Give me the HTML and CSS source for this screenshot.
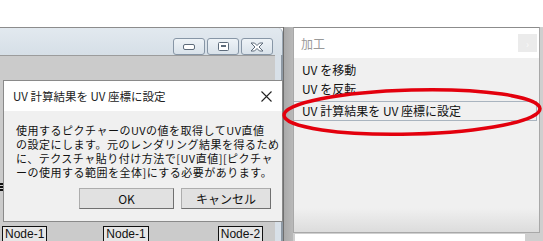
FILE: index.html
```html
<!DOCTYPE html>
<html lang="ja">
<head>
    <meta charset="UTF-8">
    <title>UV 計算結果を UV 座標に設定</title>
    <link rel="stylesheet" href="styles.css">
</head>
<body>
    <div class="screen">
        <div class="top"></div>
        <div class="desk">
            <div class="win">
                <div class="win-title">
                    <div class="caps">
                        <span class="cap">
                            <svg width="12" height="6" viewBox="0 0 12 6"><rect x="0.5" y="0.5" width="11" height="5" rx="1.5" fill="#fff" stroke="#5d6b7a"/></svg>
                        </span>
                        <span class="cap">
                            <svg width="11" height="9" viewBox="0 0 11 9"><rect x="0.5" y="0.5" width="10" height="8" rx="1" fill="#fff" stroke="#5d6b7a"/><rect x="3" y="3" width="5" height="2" fill="#5d6b7a"/></svg>
                        </span>
                        <span class="cap">
                            <svg width="14" height="10" viewBox="0 0 14 10"><path d="M1 1 H4.5 L7 3.5 L9.5 1 H13 L9 5 L13 9 H9.5 L7 6.5 L4.5 9 H1 L5 5 Z" fill="#fff" stroke="#5d6b7a" stroke-linejoin="round"/></svg>
                        </span>
                    </div>
                </div>
                <div class="win-body">
                    <div class="marks"></div>
                    <div class="dialog">
                        <div class="dlg-head">
                            <span>UV 計算結果を UV 座標に設定</span>
                            <svg class="dlg-close" width="11" height="11" viewBox="0 0 11 11"><path d="M0.5 0.5 L10.5 10.5 M10.5 0.5 L0.5 10.5" stroke="#222" stroke-width="1.1"/></svg>
                        </div>
                        <div class="dlg-body">
                            <p class="dlg-text">使用するピクチャーのUVの値を取得してUV直値<br>の設定にします。元のレンダリング結果を得るため<br>に、テクスチャ貼り付け方法で[UV直値][ピクチャ<br>ーの使用する範囲を全体]にする必要があります。</p>
                            <div class="dlg-buttons">
                                <button class="btn btn-ok">OK</button>
                                <button class="btn btn-cancel">キャンセル</button>
                            </div>
                        </div>
                    </div>
                    <div class="nodes">
                        <span class="node">Node-1</span>
                        <span class="node node-mid">Node-1</span>
                        <span class="node node-end">Node-2</span>
                    </div>
                </div>
            </div>
            <div class="gap"></div>
            <div class="side">
                <div class="panel">
                    <div class="panel-head">
                        <span>加工</span>
                        <span class="panel-btn">›</span>
                    </div>
                    <ul class="menu">
                        <li class="item">UV を移動</li>
                        <li class="item">UV を反転</li>
                        <li class="item selected">UV 計算結果を UV 座標に設定</li>
                    </ul>
                </div>
                <div class="under"></div>
            </div>
        </div>
        <!-- red annotation ring drawn over the screenshot -->
        <svg class="ring" width="266" height="56" viewBox="0 0 266 56">
            <ellipse cx="132" cy="28" rx="128" ry="22" fill="none" stroke="#e3000d" stroke-width="3.5" transform="rotate(-1.5 132 28)"/>
        </svg>
    </div>
</body>
</html>
```

FILE: styles.css
```css
* {
    box-sizing: border-box;
    margin: 0;
    padding: 0;
}

body {
    width: 543px;
    height: 241px;
    overflow: hidden;
    background: #fff;
    font-family: "Noto Sans CJK JP", sans-serif;
    font-size: 12px;
    color: #111;
}

.screen {
    position: relative;
    width: 543px;
    height: 241px;
}

.top {
    height: 27px;
}

.desk {
    display: flex;
    height: 214px;
}

/* left application window */
.win {
    width: 283px;
    display: flex;
    flex-direction: column;
    border-top: 1px solid #8c8c8c;
}

.win-title {
    height: 32px;
    background: linear-gradient(#e2e9ef, #d6dfe7);
    border-right: 1px solid #9aa6b2;
    display: flex;
    justify-content: flex-end;
    align-items: flex-start;
    padding: 10px 9px 0 0;
    border-top-right-radius: 5px;
}

.caps {
    display: flex;
    gap: 2px;
}

.cap {
    width: 32px;
    height: 17px;
    border: 1px solid #8796a6;
    border-radius: 3px;
    background: linear-gradient(#eef3f7, #d9e2ea);
    display: flex;
    align-items: center;
    justify-content: center;
}

.win-body {
    flex: 1;
    position: relative;
    display: flex;
    flex-direction: column;
    padding-top: 25px;
    background:
        linear-gradient(#9c9c9c, #9c9c9c) 0 0 / 275px 1px no-repeat,
        linear-gradient(to right, #cbcbcb 0 275px, #d8e0e8 275px 281px, #8e99a4 281px 283px);
}

.marks {
    position: absolute;
    left: 0;
    top: 128px;
    width: 3px;
    height: 8px;
    background: repeating-linear-gradient(#111 0 2px, transparent 2px 3px);
}

.dialog {
    margin-left: 3px;
    width: 280px;
    height: 142px;
    border: 1px solid #8a8a8a;
    background: #f0f0f0;
    display: flex;
    flex-direction: column;
}

.dlg-head {
    height: 30px;
    background: #fff;
    display: flex;
    align-items: center;
    justify-content: space-between;
    padding: 0 10px 0 9px;
    font-size: 11.5px;
    color: #222;
}

.dlg-body {
    flex: 1;
    padding: 12px 8px 0 12px;
    display: flex;
    flex-direction: column;
}

.dlg-text {
    font-size: 11px;
    line-height: 14px;
    letter-spacing: 0.5px;
    white-space: nowrap;
    height: 65px;
}

.dlg-buttons {
    display: flex;
    justify-content: flex-end;
    gap: 7px;
    padding-right: 3px;
}

.btn {
    height: 21px;
    font-family: "Noto Sans CJK JP", sans-serif;
    font-size: 12px;
    color: #111;
    background: #e1e1e1;
    border: 1px solid #adadad;
    border-right-color: #707070;
    border-bottom-color: #707070;
    line-height: 1;
}

.btn-ok {
    width: 95px;
}

.btn-cancel {
    width: 90px;
}

.nodes {
    display: flex;
    padding: 4px 0 0 2px;
    font-family: "Liberation Sans", sans-serif;
    font-size: 12px;
}

.node {
    border: 1px solid #111;
    border-bottom: none;
    background: #e6e6e6;
    padding: 0 2px;
    height: 16px;
    line-height: 15px;
}

.node-mid {
    margin-left: 56px;
}

.node-end {
    margin-left: 69px;
}

/* shadow strip between window and panel */
.gap {
    width: 10px;
    background: linear-gradient(to right, #6f6f6f 0 1px, #a9a9a9 1px, #b9b9b9);
}

/* right side menu panel */
.side {
    width: 250px;
    display: flex;
    flex-direction: column;
    background: #cfcfcf;
}

.panel {
    height: 206px;
    width: 247px;
    background: linear-gradient(#f0f0f0 0 180px, #dcdcdc);
    border: 1px solid #a8a8a8;
    border-top-color: #8c8c8c;
}

.panel-head {
    height: 30px;
    background: #fff;
    display: flex;
    align-items: center;
    justify-content: space-between;
    padding: 0 2px 0 7px;
    color: #999;
}

.panel-btn {
    width: 19px;
    height: 18px;
    background: #ebebeb;
    color: #fafafa;
    font-size: 10px;
    display: flex;
    align-items: center;
    justify-content: center;
}

.menu {
    list-style: none;
    padding-top: 2px;
}

.item {
    height: 19px;
    line-height: 19px;
    padding-left: 8px;
    font-size: 12px;
    color: #111;
}

.selected {
    margin-top: 3px;
    width: 243px;
    height: 20px;
    line-height: 18px;
    border: 1px solid #a9b4bf;
    border-left: none;
}

.under {
    flex: 1;
    margin: 1px 18px 0 2px;
    background: #fff;
}

.ring {
    position: absolute;
    left: 280px;
    top: 84px;
}
```
